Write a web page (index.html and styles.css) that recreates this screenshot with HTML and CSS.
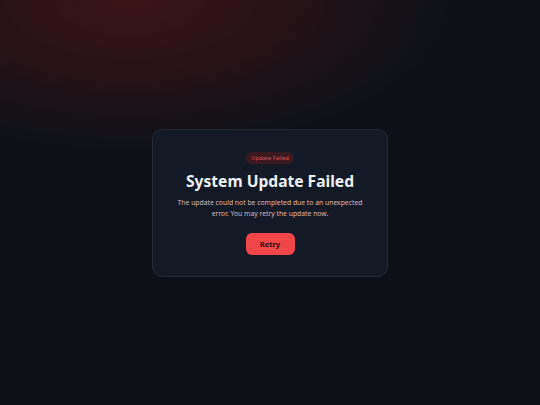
FILE: index.html
```html
<!DOCTYPE html>
<html lang="en">
<head>
    <meta charset="UTF-8">
    <meta name="viewport" content="width=device-width, initial-scale=1.0">
    <title>System Update Failed</title>
    <link rel="stylesheet" href="styles.css">
</head>
<body>

<div class="page">
    <div class="card">
        <div class="badge">Update Failed</div>
        <h1 class="title">System Update Failed</h1>
        <p class="message">The update could not be completed due to an unexpected error. You may retry the update now.</p>
        <button class="retry">Retry</button>
    </div>
</div>

</body>
</html>
```

FILE: styles.css
```css
html, body {
    margin: 0;
    height: 100%;
}

body {
    font-family: "Noto Sans", "Open Sans", sans-serif;
    background-color: #0d1117;
    background-image: radial-gradient(ellipse 320px 150px at 130px 0px, rgba(120, 24, 24, 0.45), rgba(13, 17, 23, 0) 100%);
    color: #e6e9ef;
}

.page {
    height: 100%;
    display: flex;
    align-items: center;
    justify-content: center;
}

.card {
    width: 236px;
    box-sizing: border-box;
    padding: 22px 12px 21px;
    background-color: #141a25;
    border: 1px solid #232a36;
    border-radius: 10px;
    display: flex;
    flex-direction: column;
    align-items: center;
    text-align: center;
}

.badge {
    font-size: 5.8px;
    line-height: 12px;
    padding: 0 5px;
    border-radius: 6px;
    background-color: #3a1a20;
    color: #d4525a;
}

.title {
    margin: 5px 0 0;
    font-size: 15.6px;
    line-height: 24px;
    font-weight: 700;
    color: #eef0f4;
}

.message {
    max-width: 190px;
    margin: 4px 0 0;
    font-size: 6.8px;
    line-height: 11px;
    color: #d9b8b8;
}

.retry {
    margin-top: 14px;
    width: 49px;
    height: 22px;
    border: none;
    border-radius: 6px;
    background-color: #f04549;
    color: #2a0d10;
    font-family: inherit;
    font-size: 7.5px;
    font-weight: 700;
    padding: 0;
}
```
